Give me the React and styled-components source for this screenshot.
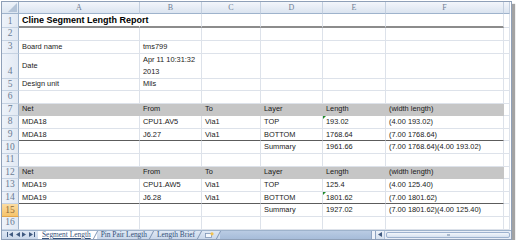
import React from "react";
import styled, { createGlobalStyle, css } from "styled-components";

const Global = createGlobalStyle`
  html, body { margin: 0; padding: 0; background: #ffffff; }
  body { font-family: "Liberation Sans", Arial, sans-serif; }
`;

const COLS = "17px 121px 62px 59px 62px 63px 118px 6px";

const Page = styled.div`
  padding: 1px 0 0 1px;
`;

const Window = styled.div`
  width: 509px;
  border: 1px solid #8fa0b8;
  background: #ffffff;
  box-shadow: 3px 3px 1px #a3a3a3;
  display: flex;
  flex-direction: column;
`;

const Row = styled.div`
  display: grid;
  grid-template-columns: ${COLS};
  height: ${(p) => p.$h}px;
`;

const Corner = styled.div`
  background: linear-gradient(#eef3fa, #dde6f1);
  border-right: 1px solid #9eb3cc;
  border-bottom: 1px solid #9eb3cc;
  box-sizing: border-box;
  display: flex;
  align-items: flex-end;
  justify-content: flex-end;
  padding: 0 1px 1px 0;
`;

const ColHead = styled.div`
  background: linear-gradient(#f3f6fb, #dbe4f0);
  border-right: 1px solid #c3cfdf;
  border-bottom: 1px solid #9eb3cc;
  box-sizing: border-box;
  display: flex;
  align-items: center;
  justify-content: center;
  font-family: "Liberation Serif", serif;
  font-size: 8px;
  color: #6f7f95;
`;

const RowHead = styled.div`
  background: ${(p) =>
    p.$selected ? "linear-gradient(#fbdca2, #f6c46b)" : "linear-gradient(90deg, #eef3fa, #e2e9f3)"};
  border-right: 1px solid #9eb3cc;
  border-bottom: 1px solid ${(p) => (p.$selected ? "#e3a64a" : "#c5d2e2")};
  box-sizing: border-box;
  display: flex;
  align-items: flex-end;
  justify-content: center;
  padding-bottom: 1px;
  font-family: "Liberation Serif", serif;
  font-size: 9.5px;
  line-height: 1;
  color: ${(p) => (p.$selected ? "#8a6a3a" : "#6a7b93")};
`;

const Cell = styled.div`
  position: relative;
  box-sizing: border-box;
  display: flex;
  flex-direction: column;
  justify-content: center;
  padding: 0 0 0 3px;
  white-space: nowrap;
  overflow: ${(p) => (p.$overflow ? "visible" : "hidden")};
  z-index: ${(p) => (p.$overflow ? 1 : 0)};
  font-size: 7.4px;
  line-height: 12px;
  color: #1a1a1a;
  border-right: 1px solid ${(p) => (p.$noRight ? "transparent" : "#dde2ea")};
  border-bottom: 1px solid #dde2ea;
  ${(p) =>
    p.$fill &&
    css`
      background: #c6c6c6;
      border-right-color: #c6c6c6;
      border-bottom-color: #c6c6c6;
    `}
  ${(p) =>
    p.$rule === "thick" &&
    css`
      border-bottom: 2px solid #8c8c8c;
    `}
  ${(p) =>
    p.$rule === "dark" &&
    css`
      border-bottom: 1px solid #5c5c5c;
    `}
  ${(p) =>
    p.$title &&
    css`
      font-weight: bold;
      font-size: 9px;
      color: #000;
    `}
`;

const Flag = styled.span`
  position: absolute;
  left: 0;
  top: 0;
  width: 0;
  height: 0;
  border-top: 3px solid #1f8a2a;
  border-right: 3px solid transparent;
`;

const TabBar = styled.div`
  display: flex;
  height: 8px;
  background: linear-gradient(#dfe8f4, #c9d7ea);
  border-top: 1px solid #9eb3cc;
  align-items: stretch;
`;

const Nav = styled.div`
  width: 36px;
  display: flex;
  align-items: center;
  justify-content: space-around;
  padding: 0 2px 0 4px;
  box-sizing: border-box;
`;

const Tabs = styled.div`
  display: flex;
  align-items: stretch;
  font-family: "Liberation Serif", serif;
  font-size: 7.4px;
  color: #34517a;
`;

const Tab = styled.div`
  position: relative;
  display: flex;
  align-items: center;
  padding: 0 6px 0 4px;
  line-height: 1;
  background: ${(p) => (p.$active ? "#ffffff" : "transparent")};
  text-decoration: ${(p) => (p.$active ? "underline" : "none")};
  &::after {
    content: "";
    position: absolute;
    right: 1px;
    top: 0;
    bottom: 0;
    border-right: 1px solid #7f96b6;
    transform: skewX(-28deg);
  }
`;

const NewSheet = styled.div`
  display: flex;
  align-items: center;
  padding: 0 6px 0 4px;
  position: relative;
  &::after {
    content: "";
    position: absolute;
    right: 1px;
    top: 0;
    bottom: 0;
    border-right: 1px solid #7f96b6;
    transform: skewX(-28deg);
  }
`;

const Filler = styled.div`
  flex: 1;
  background: linear-gradient(#b9cbe3, #a6bcd9);
`;

const Splitter = styled.div`
  width: 3px;
  background: #eef3fa;
  border-left: 1px solid #8ea4c2;
  border-right: 1px solid #8ea4c2;
`;

const ScrollBar = styled.div`
  width: 135px;
  display: flex;
  align-items: stretch;
  background: #e8eef7;
`;

const ScrollBtn = styled.div`
  width: 8px;
  display: flex;
  align-items: center;
  justify-content: center;
  background: linear-gradient(#eef3fa, #d4dfee);
  border-right: 1px solid #b1c3dc;
`;

const Thumb = styled.div`
  flex: 1;
  margin: 1px 1px;
  border: 1px solid #9db2cf;
  border-radius: 2px;
  background: linear-gradient(#f2f6fb, #d6e1ef);
  display: flex;
  align-items: center;
  justify-content: center;
`;

const Grip = styled.div`
  width: 3px;
  height: 2px;
  background: #a8b8cc;
`;

const Arrow = ({ dir = "left", bar = false }) => (
  <svg width={bar ? 6 : 4} height="5" viewBox={bar ? "0 0 6 5" : "0 0 4 5"}>
    {dir === "left" ? (
      <>
        {bar && <rect x="0" y="0" width="1" height="5" fill="#405a80" />}
        <polygon points={bar ? "6,0 6,5 2,2.5" : "4,0 4,5 0,2.5"} fill="#405a80" />
      </>
    ) : (
      <>
        <polygon points="0,0 0,5 4,2.5" fill="#405a80" />
        {bar && <rect x="5" y="0" width="1" height="5" fill="#405a80" />}
      </>
    )}
  </svg>
);

const LETTERS = ["A", "B", "C", "D", "E", "F", ""];
const HEAD = ["Net", "From", "To", "Layer", "Length", "(width length)"];

const ROWS = [
  { n: 1, h: 13.5, cells: ["Cline Segment Length Report"], title: true, rule: "thick" },
  { n: 2, h: 13 },
  { n: 3, h: 13, cells: ["Board name", "tms799"] },
  { n: 4, h: 25, cells: ["Date", ["Apr 11 10:31:32", "2013"]] },
  { n: 5, cells: ["Design unit", "Mils"] },
  { n: 6 },
  { n: 7, cells: HEAD, fill: true },
  { n: 8, cells: ["MDA18", "CPU1.AV5", "Via1", "TOP", "193.02", "(4.00 193.02)"], flag: 4 },
  { n: 9, cells: ["MDA18", "J6.27", "Via1", "BOTTOM", "1768.64", "(7.00 1768.64)"], rule: "dark" },
  { n: 10, cells: ["", "", "", "Summary", "1961.66", "(7.00 1768.64)(4.00 193.02)"] },
  { n: 11 },
  { n: 12, cells: HEAD, fill: true },
  { n: 13, cells: ["MDA19", "CPU1.AW5", "Via1", "TOP", "125.4", "(4.00 125.40)"] },
  { n: 14, cells: ["MDA19", "J6.28", "Via1", "BOTTOM", "1801.62", "(7.00 1801.62)"], flag: 4, rule: "dark" },
  { n: 15, cells: ["", "", "", "Summary", "1927.02", "(7.00 1801.62)(4.00 125.40)"], selected: true },
  { n: 16 },
];

function SheetRow({ row }) {
  const cells = row.cells || [];
  return (
    <Row $h={row.h || 12.6}>
      <RowHead $selected={row.selected}>{row.n}</RowHead>
      {[0, 1, 2, 3, 4, 5, 6].map((i) => {
        const inRange = i < 6;
        const v = cells[i];
        return (
          <Cell
            key={i}
            $fill={row.fill && inRange}
            $rule={inRange ? row.rule : undefined}
            $title={row.title && i === 0}
            $overflow={row.title && i === 0}
            $noRight={row.title && i === 0}
          >
            {row.flag === i && <Flag />}
            {Array.isArray(v) ? v.map((line) => <span key={line}>{line}</span>) : v}
          </Cell>
        );
      })}
    </Row>
  );
}

export default function App() {
  return (
    <Page>
      <Global />
      <Window>
        <Row $h={12}>
          <Corner>
            <svg width="9" height="9" viewBox="0 0 9 9">
              <polygon points="9,0 9,9 0,9" fill="#b4c4d8" />
            </svg>
          </Corner>
          {LETTERS.map((l, i) => (
            <ColHead key={i}>{l}</ColHead>
          ))}
        </Row>
        {ROWS.map((r) => (
          <SheetRow key={r.n} row={r} />
        ))}
        <TabBar>
          <Nav>
            <Arrow dir="left" bar />
            <Arrow dir="left" />
            <Arrow dir="right" />
            <Arrow dir="right" bar />
          </Nav>
          <Tabs>
            <Tab $active>Segment Length</Tab>
            <Tab>Pin Pair Length</Tab>
            <Tab>Length Brief</Tab>
            <NewSheet>
              <svg width="9" height="6" viewBox="0 0 9 6">
                <rect x="0.5" y="1.5" width="6" height="4" fill="#f4f7fb" stroke="#7f96b6" strokeWidth="0.8" />
                <circle cx="7" cy="1.8" r="1.6" fill="#f2c14e" />
              </svg>
            </NewSheet>
          </Tabs>
          <Filler />
          <Splitter />
          <ScrollBar>
            <ScrollBtn>
              <Arrow dir="left" />
            </ScrollBtn>
            <Thumb>
              <Grip />
            </Thumb>
          </ScrollBar>
        </TabBar>
      </Window>
    </Page>
  );
}
